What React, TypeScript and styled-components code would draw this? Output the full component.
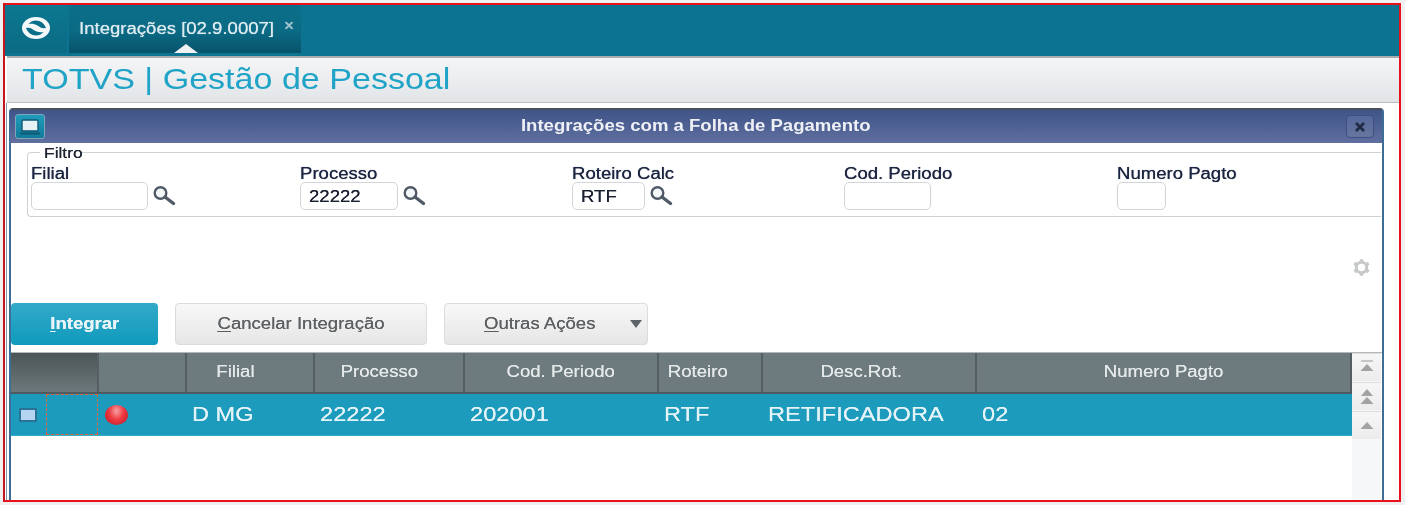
import React, {FunctionComponent} from 'react';
import styled, {createGlobalStyle} from 'styled-components';

const GlobalStyle = createGlobalStyle`
  html, body {
    margin: 0;
    padding: 0;
    width: 1405px;
    height: 505px;
    overflow: hidden;
    background: #f0f0f0;
    font-family: "Liberation Sans", Arial, sans-serif;
  }
`

const COLUMNS = '35px 53px 88px 128px 150px 194px 104px 214px 375px';

// the reference is a screenshot stretched sideways, so the text is widened the same way
const Wide = styled.span<{$x?: number; $center?: boolean}>`
  display: inline-block;
  white-space: nowrap;
  transform: scaleX(${p => p.$x ?? 1.16});
  transform-origin: ${p => (p.$center ? 'center' : 'left')};
`

const Frame = styled.div`
  box-sizing: border-box;
  width: 1398px;
  height: 499px;
  margin: 3px 0 0 3px;
  border: 2px solid #e8101a;
  border-left-color: #c8141c;
  background: #fff;
  display: flex;
  flex-direction: column;
  overflow: hidden;
`

const TopBar = styled.div`
  flex: none;
  height: 51px;
  background: #0c7390;
  display: flex;
  gap: 2px;
`

const LogoTile = styled.div`
  width: 62px;
  height: 48px;
  background: linear-gradient(#0d7891, #0b6a84);
  display: flex;
  align-items: center;
  justify-content: center;
  padding-bottom: 2px;
  box-sizing: border-box;
`

const Tab = styled.div`
  position: relative;
  width: 232px;
  height: 48px;
  box-sizing: border-box;
  padding: 15px 0 0 10px;
  background: linear-gradient(#0c6f8a 0%, #0b6a84 55%, #07536a 100%);
  color: #dcebf0;
  font-size: 16px;
  line-height: 18px;
  text-shadow: 0 0 0.7px #dcebf0;
`

const TabClose = styled.span`
  position: absolute;
  left: 215px;
  top: 12px;
  font-size: 17px;
  color: #9fc0cc;
`

const TabMarker = styled.span`
  position: absolute;
  left: 105px;
  bottom: 0;
  width: 0;
  height: 0;
  border-left: 12px solid transparent;
  border-right: 12px solid transparent;
  border-bottom: 9px solid #eef2f3;
`

const AppHeader = styled.div`
  flex: none;
  box-sizing: border-box;
  height: 47px;
  margin-left: 2px;
  border-top: 2px solid #a9adb0;
  border-bottom: 1px solid #b9bdc0;
  background: linear-gradient(#f4f5f6, #e2e5e8);
  color: #1fa3c6;
  font-size: 30px;
  line-height: 41px;
  padding-left: 15px;
`

const Desktop = styled.div`
  flex: 1;
  min-height: 0;
  margin-left: 1px;
  border-left: 1px solid #7f9db2;
  display: flex;
`

const Window = styled.div`
  flex: none;
  width: 1375px;
  box-sizing: border-box;
  margin: 5px 0 0 2px;
  border-left: 2px solid #3e6d96;
  border-right: 2px solid #3e6d96;
  border-top: 2px solid #4a4f5c;
  border-radius: 4px 4px 0 0;
  display: flex;
  flex-direction: column;
`

const TitleBar = styled.div`
  flex: none;
  height: 33px;
  background: linear-gradient(#3f5488, #5f6f9f);
  display: flex;
  align-items: center;
  justify-content: space-between;
  padding: 0 8px 0 5px;
  margin-left: -1px;
  color: #eef0f6;
  font-size: 16px;
  font-weight: 700;
`

const TitleText = styled.div`
  padding-bottom: 1px;
`

const WindowIcon = styled.div`
  width: 30px;
  height: 25px;
  box-sizing: border-box;
  border: 1px solid #7fa6bd;
  border-radius: 3px;
  background: linear-gradient(#1f9cbb, #127a99);
  display: flex;
  align-items: center;
  justify-content: center;
`

const CloseButton = styled.div`
  width: 28px;
  height: 23px;
  box-sizing: border-box;
  border: 1px solid #3f5080;
  border-radius: 4px;
  background: linear-gradient(#55689a, #66769f);
  display: flex;
  align-items: center;
  justify-content: center;
`

const Filter = styled.fieldset`
  flex: none;
  box-sizing: border-box;
  height: 72px;
  width: 1354px;
  margin: 2px 0 0 16px;
  padding: 5px 0 0 3px;
  border: 1px solid #cfd2d4;
  border-right: none;
  border-radius: 4px 0 0 4px;
  display: grid;
  grid-template-columns: 269px 272px 272px 273px 1fr;
`

const FilterLegend = styled.legend`
  margin-left: 9px;
  padding: 0 4px;
  font-size: 15px;
  line-height: 15px;
  color: #1d2430;
  text-shadow: 0 0 0.4px #1d2430;
`

const Field = styled.div`
  display: flex;
  flex-direction: column;
`

const FieldLabel = styled.label`
  font-size: 16px;
  line-height: 17px;
  color: #1b2440;
  text-shadow: 0 0 0.7px #1b2440;
`

const FieldRow = styled.div`
  display: flex;
  align-items: center;
  gap: 4px;
`

const FieldValue = styled.div<{$width: number}>`
  width: ${p => p.$width}px;
  height: 28px;
  box-sizing: border-box;
  border: 1px solid #d2d5d7;
  border-radius: 5px;
  padding-left: 8px;
  font-size: 16px;
  line-height: 27px;
  color: #1b2030;
  text-shadow: 0 0 0.4px #1b2030;
`

const GearRow = styled.div`
  flex: none;
  height: 86px;
  box-sizing: border-box;
  display: flex;
  align-items: flex-end;
  justify-content: flex-end;
  padding: 0 11px 26px 0;
`

const Toolbar = styled.div`
  flex: none;
  height: 42px;
  display: flex;
  gap: 17px;
`

const ActionButton = styled.div<{$width: number; $primary?: boolean}>`
  width: ${p => p.$width}px;
  box-sizing: border-box;
  border-radius: 4px;
  display: flex;
  align-items: center;
  justify-content: center;
  font-size: 16px;
  text-shadow: 0 0 0.5px currentColor;
  color: ${p => (p.$primary ? '#eaf5f8' : '#5c6063')};
  font-weight: ${p => (p.$primary ? 700 : 400)};
  background: ${p => (p.$primary ? 'linear-gradient(#35a9c8, #0f9abd)' : 'linear-gradient(#f8f8f8, #e6e6e6)')};
  border: ${p => (p.$primary ? 'none' : '1px solid #dcdcdc')};
  u {
    text-underline-offset: 2px;
  }
`

const MenuButton = styled(ActionButton)`
  justify-content: space-between;
  padding: 0 5px 0 39px;
`

const MenuCaret = styled.span`
  width: 0;
  height: 0;
  border-left: 6px solid transparent;
  border-right: 6px solid transparent;
  border-top: 8px solid #5f6468;
`

const GridArea = styled.div`
  flex: 1;
  display: flex;
  margin-top: 7px;
  border-top: 1px solid #b4b8ba;
  min-height: 0;
`

const GridMain = styled.div`
  width: 1341px;
  flex: none;
`

const GridHeader = styled.div`
  display: grid;
  grid-template-columns: ${COLUMNS};
  height: 41px;
  box-sizing: border-box;
  border-bottom: 2px solid #4f5b60;
`

const HeaderCell = styled.div<{$dark?: boolean; $inset?: number}>`
  grid-column: ${p => (p.$dark ? 'span 2' : 'auto')};
  background: ${p => (p.$dark ? 'linear-gradient(#4b5556, #6c787b)' : '#6d7a7e')};
  border-right: 2px solid #555f63;
  box-sizing: border-box;
  padding: 0 ${p => p.$inset ?? 0}px 2px 0;
  display: flex;
  align-items: center;
  justify-content: center;
  color: #e6e9ea;
  font-size: 16px;
  text-shadow: 0 0 0.6px #e6e9ea;
`

const DataRow = styled.div`
  display: grid;
  grid-template-columns: ${COLUMNS};
  height: 42px;
  background: #1c9bbc;
  border-bottom: 1px solid #35adc9;
  box-sizing: border-box;
`

const DataCell = styled.div`
  display: flex;
  align-items: center;
  padding-left: 5px;
  color: #e4f3f7;
  font-size: 20px;
  text-shadow: 0 0 0.3px #e4f3f7;
`

const CheckCell = styled.div`
  display: flex;
  align-items: center;
  justify-content: center;
  padding-right: 2px;
`

const CheckBox = styled.span`
  width: 18px;
  height: 14px;
  box-sizing: border-box;
  border: 2px solid #2a7396;
  background: #b4d4f1;
`

const FocusCell = styled.div`
  border: 1px dashed #e2683a;
  margin-right: 1px;
`

const LedCell = styled.div`
  display: flex;
  align-items: center;
  padding-left: 6px;
`

const Led = styled.span`
  width: 23px;
  height: 20px;
  border-radius: 50%;
  background: radial-gradient(ellipse at 50% 30%, #f6a0a4 0%, #ee3a40 45%, #c5202a 85%, #8a3a48 100%);
`

const ScrollBar = styled.div`
  width: 29px;
  flex: none;
  background: #f6f7f9;
  display: flex;
  flex-direction: column;
  gap: 1px;
`

const ScrollButton = styled.div`
  height: 27px;
  background: linear-gradient(#f6f6f6, #ececec);
  border-top: 1px solid #dedede;
  display: flex;
  align-items: center;
  justify-content: center;
`

const Lens: FunctionComponent = () => (
    <svg width="24" height="22" viewBox="0 0 24 22">
        <circle cx="8.5" cy="8" r="5.8" fill="#f4f7f8" stroke="#4f5a66" strokeWidth="2.4" />
        <path d="M13 12 L21.5 18.5" stroke="#4f5a66" strokeWidth="3.4" strokeLinecap="round" />
    </svg>
)

const Gear: FunctionComponent = () => (
    <svg width="19" height="19" viewBox="0 0 24 24" fill="none" stroke="#c6c8ca">
        <circle cx="12" cy="12" r="6.6" strokeWidth="3.8" />
        <path
            d="M12 1.5 V5 M12 19 V22.5 M2.9 6.75 L5.9 8.5 M18.1 15.5 L21.1 17.25 M2.9 17.25 L5.9 15.5 M18.1 8.5 L21.1 6.75"
            strokeWidth="4.4"
        />
    </svg>
)

const ScrollArrows: FunctionComponent<{kind: 'first' | 'page' | 'up'}> = ({kind}) => (
    <svg width="16" height="20" viewBox="0 0 16 20">
        {kind === 'first' && <path d="M2 3 H14" stroke="#9a9a9a" strokeWidth="1" />}
        {kind === 'first' && <path d="M8 6 L14.5 13 H1.5 Z" fill="#a3a3a3" />}
        {kind === 'page' && <path d="M8 2 L14 9 H2 Z M8 10 L14.5 17 H1.5 Z" fill="#a3a3a3" />}
        {kind === 'up' && <path d="M8 6 L14.5 13 H1.5 Z" fill="#a3a3a3" />}
    </svg>
)

const App: FunctionComponent = (): JSX.Element => {
    return (
        <>
            <GlobalStyle />
            <Frame>
                <TopBar>
                    <LogoTile>
                        <svg width="28" height="22" viewBox="0 0 28 22">
                            <ellipse cx="14" cy="11" rx="14" ry="11" fill="#f4f8f9" />
                            <path d="M6.5 7 C8.5 4.5 11 3.5 14 3.5 C18.5 3.5 22.5 6.5 24 11 C20 12 18.5 10.5 15.5 8.5 C12.5 6.8 10 6.5 6.5 7 Z" fill="#0c6f8a" />
                            <path d="M21.5 15 C19.5 17.5 17 18.5 14 18.5 C9.5 18.5 5.5 15.5 4 11 C8 10 9.5 11.5 12.5 13.5 C15.5 15.2 18 15.5 21.5 15 Z" fill="#0c6f8a" />
                        </svg>
                    </LogoTile>
                    <Tab>
                        <Wide>Integrações [02.9.0007]</Wide>
                        <TabClose>×</TabClose>
                        <TabMarker />
                    </Tab>
                </TopBar>
                <AppHeader><Wide $x={1.135}>TOTVS | Gestão de Pessoal</Wide></AppHeader>
                <Desktop>
                    <Window>
                        <TitleBar>
                            <WindowIcon>
                                <svg width="22" height="18" viewBox="0 0 22 18">
                                    <rect x="3" y="2" width="16" height="11" rx="1" fill="#e6f1f5" stroke="#0d5a75" strokeWidth="1.4" />
                                    <path d="M1 15.5 H21" stroke="#0d5a75" strokeWidth="2" />
                                </svg>
                            </WindowIcon>
                            <TitleText><Wide $center>Integrações com a Folha de Pagamento</Wide></TitleText>
                            <CloseButton>
                                <svg width="12" height="10" viewBox="0 0 12 10">
                                    <path d="M2 1 L10 9 M10 1 L2 9" stroke="#1f2b40" strokeWidth="2.6" />
                                </svg>
                            </CloseButton>
                        </TitleBar>
                        <Filter>
                            <FilterLegend><Wide>Filtro</Wide></FilterLegend>
                            <Field>
                                <FieldLabel><Wide>Filial</Wide></FieldLabel>
                                <FieldRow>
                                    <FieldValue $width={117} />
                                    <Lens />
                                </FieldRow>
                            </Field>
                            <Field>
                                <FieldLabel><Wide>Processo</Wide></FieldLabel>
                                <FieldRow>
                                    <FieldValue $width={98}><Wide>22222</Wide></FieldValue>
                                    <Lens />
                                </FieldRow>
                            </Field>
                            <Field>
                                <FieldLabel><Wide>Roteiro Calc</Wide></FieldLabel>
                                <FieldRow>
                                    <FieldValue $width={73}><Wide>RTF</Wide></FieldValue>
                                    <Lens />
                                </FieldRow>
                            </Field>
                            <Field>
                                <FieldLabel><Wide>Cod. Periodo</Wide></FieldLabel>
                                <FieldRow>
                                    <FieldValue $width={87} />
                                </FieldRow>
                            </Field>
                            <Field>
                                <FieldLabel><Wide>Numero Pagto</Wide></FieldLabel>
                                <FieldRow>
                                    <FieldValue $width={49} />
                                </FieldRow>
                            </Field>
                        </Filter>
                        <GearRow>
                            <Gear />
                        </GearRow>
                        <Toolbar>
                            <ActionButton $primary $width={147}><Wide $center><u>I</u>ntegrar</Wide></ActionButton>
                            <ActionButton $width={252}><Wide $center><u>C</u>ancelar Integração</Wide></ActionButton>
                            <MenuButton $width={204}>
                                <Wide><u>O</u>utras Ações</Wide>
                                <MenuCaret />
                            </MenuButton>
                        </Toolbar>
                        <GridArea>
                            <GridMain>
                                <GridHeader>
                                    <HeaderCell $dark />
                                    <HeaderCell />
                                    <HeaderCell $inset={30}><Wide $center>Filial</Wide></HeaderCell>
                                    <HeaderCell $inset={20}><Wide $center>Processo</Wide></HeaderCell>
                                    <HeaderCell><Wide $center>Cod. Periodo</Wide></HeaderCell>
                                    <HeaderCell $inset={24}><Wide $center>Roteiro</Wide></HeaderCell>
                                    <HeaderCell $inset={16}><Wide $center>Desc.Rot.</Wide></HeaderCell>
                                    <HeaderCell><Wide $center>Numero Pagto</Wide></HeaderCell>
                                </GridHeader>
                                <DataRow>
                                    <CheckCell><CheckBox /></CheckCell>
                                    <FocusCell />
                                    <LedCell><Led /></LedCell>
                                    <DataCell><Wide $x={1.18}>D MG</Wide></DataCell>
                                    <DataCell><Wide $x={1.18}>22222</Wide></DataCell>
                                    <DataCell><Wide $x={1.18}>202001</Wide></DataCell>
                                    <DataCell><Wide $x={1.18}>RTF</Wide></DataCell>
                                    <DataCell><Wide $x={1.18}>RETIFICADORA</Wide></DataCell>
                                    <DataCell><Wide $x={1.18}>02</Wide></DataCell>
                                </DataRow>
                            </GridMain>
                            <ScrollBar>
                                <ScrollButton><ScrollArrows kind="first" /></ScrollButton>
                                <ScrollButton><ScrollArrows kind="page" /></ScrollButton>
                                <ScrollButton><ScrollArrows kind="up" /></ScrollButton>
                            </ScrollBar>
                        </GridArea>
                    </Window>
                </Desktop>
            </Frame>
        </>
    )
}

export default App;
